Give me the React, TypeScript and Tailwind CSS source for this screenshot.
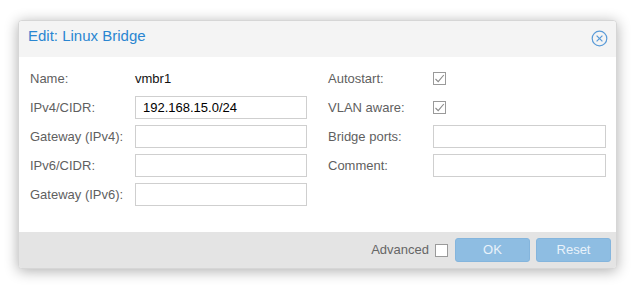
import React from "react";

const font = { fontFamily: '"Liberation Sans", Arial, sans-serif' };

function Check({ checked }: { checked?: boolean }) {
  return (
    <span className="inline-flex h-[13px] w-[13px] items-center justify-center border border-[#9a9a9a] bg-white">
      {checked && (
        <svg width="11" height="11" viewBox="0 0 11 11">
          <path d="M1.5 6 L4.2 8.6 L9.8 2" fill="none" stroke="#8a8a8a" strokeWidth="1.1" />
        </svg>
      )}
    </span>
  );
}

function Row({ label, children }: { label: string; children: React.ReactNode }) {
  return (
    <div className="flex h-[23px] items-center">
      <div className="w-[105px] shrink-0 text-[13px] text-[#5f5f5f]">{label}</div>
      <div className="flex flex-1 items-center">{children}</div>
    </div>
  );
}

function Field({ value, w }: { value?: string; w: string }) {
  return (
    <div className={`flex h-[23px] ${w} items-center border border-[#cfcfcf] bg-white px-[7px] text-[13px] text-black`}>
      {value}
    </div>
  );
}

export default function App() {
  return (
    <div className="min-h-[289px] w-[635px] bg-white pl-[18px] pt-[20px]" style={font}>
      <div className="w-[599px] overflow-hidden rounded-[4px] border border-[#d6d6d6] bg-white shadow-[0_2px_14px_rgba(0,0,0,0.32)]">
        {/* Header */}
        <div className="flex h-[36px] items-center justify-between bg-[#f4f4f4] pl-[9px] pr-[8px]">
          <span className="mb-[5px] text-[15px] text-[#2a86d1]">Edit: Linux Bridge</span>
          <svg className="mb-[2px]" width="17" height="17" viewBox="0 0 17 17">
            <circle cx="8.5" cy="8.5" r="7.3" fill="none" stroke="#5a9bd8" strokeWidth="1.2" />
            <path d="M5.6 5.6 L11.4 11.4 M11.4 5.6 L5.6 11.4" stroke="#5a9bd8" strokeWidth="1.2" />
          </svg>
        </div>

        {/* Body */}
        <div className="flex gap-[21px] pb-[26px] pl-[11px] pr-[10px] pt-[10px]">
          <div className="flex w-[277px] flex-col gap-[6px]">
            <Row label="Name:">
              <span className="text-[13px] text-[#111]">vmbr1</span>
            </Row>
            <Row label="IPv4/CIDR:">
              <Field value="192.168.15.0/24" w="w-[172px]" />
            </Row>
            <Row label="Gateway (IPv4):">
              <Field w="w-[172px]" />
            </Row>
            <Row label="IPv6/CIDR:">
              <Field w="w-[172px]" />
            </Row>
            <Row label="Gateway (IPv6):">
              <Field w="w-[172px]" />
            </Row>
          </div>
          <div className="flex w-[278px] flex-col gap-[6px]">
            <Row label="Autostart:">
              <Check checked />
            </Row>
            <Row label="VLAN aware:">
              <Check checked />
            </Row>
            <Row label="Bridge ports:">
              <Field w="w-[173px]" />
            </Row>
            <Row label="Comment:">
              <Field w="w-[173px]" />
            </Row>
          </div>
        </div>

        {/* Footer */}
        <div className="flex h-[36px] items-center justify-end bg-[#e4e4e4] pr-[5px]">
          <span className="mr-[6px] text-[13px] text-[#666]">Advanced</span>
          <Check />
          <button className="ml-[7px] h-[24px] w-[75px] rounded-[3px] border border-[#84b5dd] bg-[#8ebde2] text-[13px] text-[#e9f2fa]">
            OK
          </button>
          <button className="ml-[6px] h-[24px] w-[75px] rounded-[3px] border border-[#84b5dd] bg-[#8ebde2] text-[13px] text-[#e9f2fa]">
            Reset
          </button>
        </div>
      </div>
    </div>
  );
}
